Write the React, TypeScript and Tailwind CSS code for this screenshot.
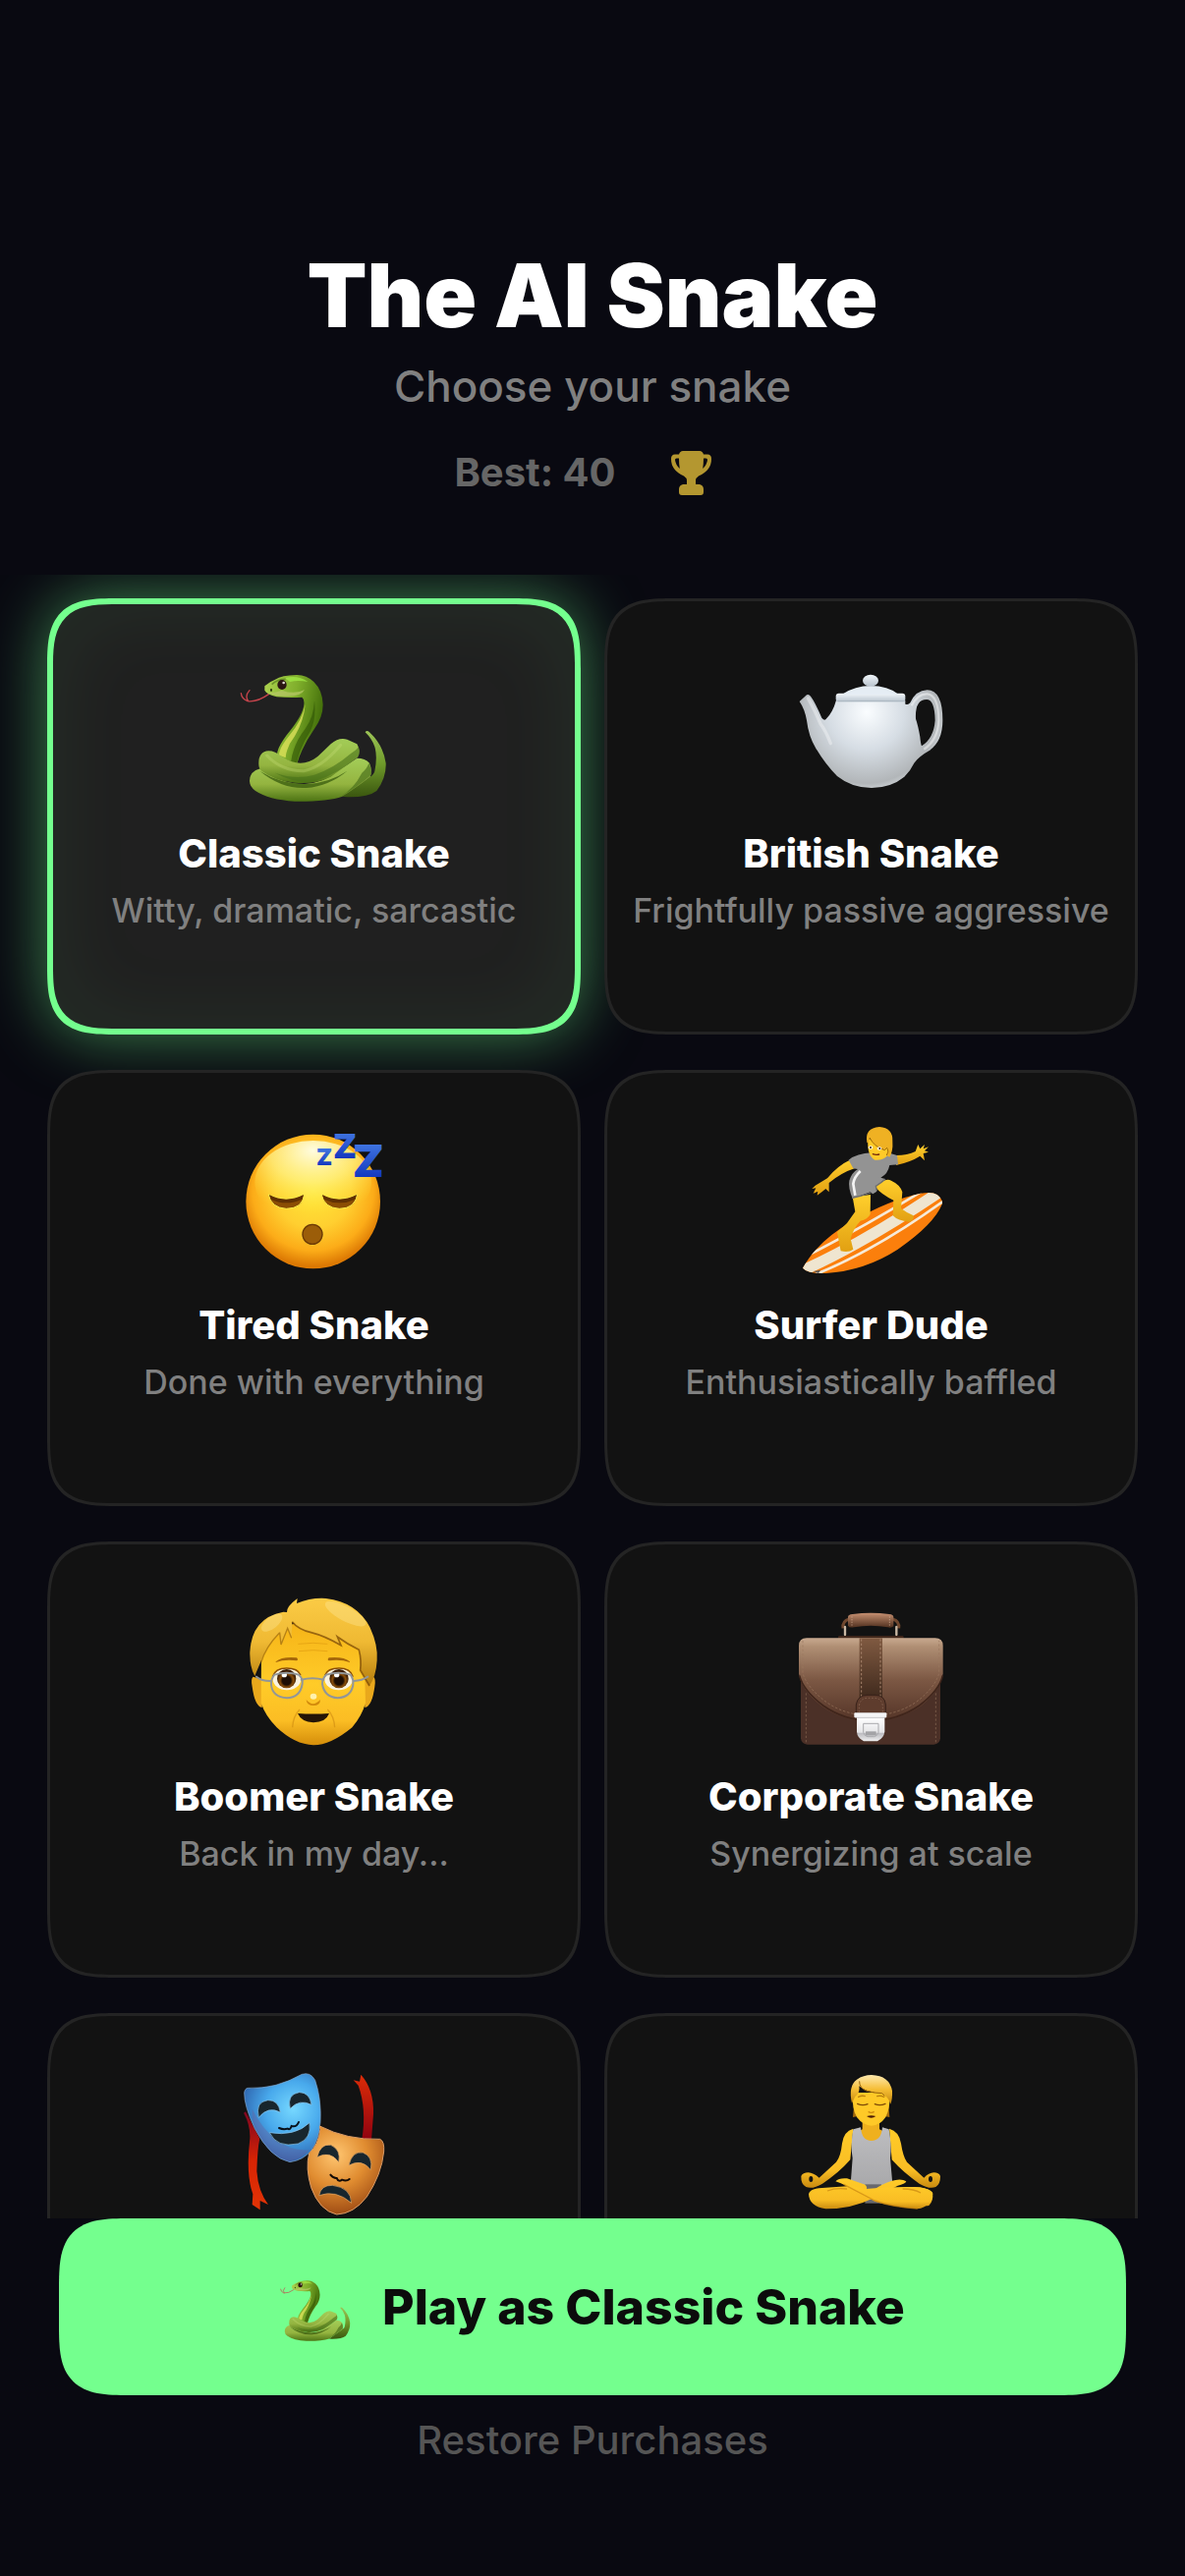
import { useId, useState, type ReactNode } from "react";

function SnakeArt({ viewBox, className }: { viewBox: string; className: string }) {
  const id = useId();
  const neck = `${id}-neck`;
  const coil = `${id}-coil`;
  const tail = `${id}-tail`;
  return (
    <svg viewBox={viewBox} className={className} aria-hidden="true">
      <defs>
        <linearGradient id={neck} x1="0" y1="0.2" x2="1" y2="0.5">
          <stop offset="0" stopColor="#a9cf4c" />
          <stop offset="0.5" stopColor="#7fae2b" />
          <stop offset="1" stopColor="#3f6b08" />
        </linearGradient>
        <linearGradient id={coil} x1="0" y1="0" x2="0" y2="1">
          <stop offset="0" stopColor="#a3cd58" />
          <stop offset="0.6" stopColor="#94b440" />
          <stop offset="1" stopColor="#4d7414" />
        </linearGradient>
        <linearGradient id={tail} x1="0" y1="0" x2="0" y2="1">
          <stop offset="0" stopColor="#9cc456" />
          <stop offset="0.5" stopColor="#6f9a2a" />
          <stop offset="1" stopColor="#3a560f" />
        </linearGradient>
      </defs>
      <path d="M160 110Q125 135 96 131Q78 124 76 107M102 98Q86 115 98 131" fill="none" stroke="#c5444c" strokeWidth="4" strokeLinecap="round" />
      <path d="M455 226Q460 218 468 226Q510 265 518 320Q520 365 490 405Q465 425 400 424L385 422L470 362Q482 355 484 345Q493 300 484 270Q475 245 455 226Z" fill={`url(#${tail})`} />
      <path d="M148 98L148 85Q165 70 180 65Q200 52 245 51Q275 50 298 72Q325 98 326 142Q326 180 300 215Q262 270 247 322L186 300Q182 280 215 235Q265 175 268 142Q270 125 262 119Q225 122 185 118Q155 110 148 98Z" fill={`url(#${neck})`} />
      <path d="M192 296Q192 275 222 238Q262 190 272 140Q268 190 240 238Q214 272 212 304Z" fill="#e3e65e" opacity="0.75" />
      <path d="M228 318Q235 262 272 215Q298 180 300 130Q306 185 288 222Q258 268 246 320Z" fill="#2f5405" opacity="0.6" />
      <path d="M200 98Q240 112 270 96Q260 116 220 116Q180 118 156 104Q175 108 200 98Z" fill="#b9c86a" opacity="0.7" />
      <path d="M210 60Q250 50 280 72Q250 66 225 72Z" fill="#a2ee46" opacity="0.7" />
      <path d="M102 375Q102 345 135 337Q200 385 270 384Q330 380 370 345L430 305Q455 305 468 320Q478 345 470 362Q420 400 385 422Q340 438 240 437Q160 432 120 405Q102 392 102 375Z" fill={`url(#${coil})`} />
      <path d="M134 345Q200 400 275 396Q345 390 400 344Q350 378 280 384Q200 386 134 345Z" fill="#3c5f10" opacity="0.8" />
      <path d="M445 350Q420 400 375 425Q430 395 472 358Q476 340 466 320Q462 335 445 350Z" fill="#456b18" opacity="0.65" />
      <path d="M130 325Q128 285 160 283Q180 283 200 300Q260 340 310 300L350 262Q375 240 400 248L430 262Q443 285 432 302Q380 340 350 362Q300 386 240 380Q180 375 140 345Q130 337 130 325Z" fill={`url(#${coil})`} />
      <path d="M412 290Q360 335 300 356Q240 372 180 350Q240 384 300 376Q370 355 434 300Q440 285 434 270Q430 280 412 290Z" fill="#48721a" opacity="0.6" />
      <path d="M155 297Q200 345 268 344Q322 334 380 265" fill="none" stroke="#c9e07a" strokeWidth="9" strokeLinecap="round" opacity="0.3" />
      <path d="M170 80Q185 64 212 64" fill="none" stroke="#557c1c" strokeWidth="5" opacity="0.7" />
      <ellipse cx="201" cy="81" rx="14" ry="15" fill="#2b1512" />
      <circle cx="206" cy="75" r="4" fill="#ddd6d0" />
      <ellipse cx="168" cy="97" rx="3" ry="5" fill="#28380c" />
    </svg>
  );
}

function TeapotArt() {
  return (
    <>
      <defs>
        <radialGradient id="pot-body" gradientUnits="userSpaceOnUse" cx="275" cy="165" r="255">
          <stop offset="0" stopColor="#fafdff" />
          <stop offset="0.45" stopColor="#d6dde4" />
          <stop offset="0.85" stopColor="#b2b6b9" />
          <stop offset="1" stopColor="#dde2e6" />
        </radialGradient>
        <linearGradient id="pot-lid" x1="0" y1="0" x2="0" y2="1">
          <stop offset="0" stopColor="#f2f7fb" />
          <stop offset="1" stopColor="#b8c3cd" />
        </linearGradient>
      </defs>
      <path
        fillRule="evenodd"
        fill="url(#pot-body)"
        d="M182 128Q172 165 150 187Q145 191 138 182Q118 135 104 116Q98 108 92 112L70 132Q86 155 92 190Q98 240 120 275Q150 325 185 360Q230 396 290 396Q350 395 390 362Q408 345 420 320Q435 300 465 283Q507 255 507 190Q507 98 460 97Q425 98 408 136Q402 144 393 140V128ZM425 185Q422 126 458 126Q483 126 484 190Q480 245 443 268Q440 262 438 240Q432 205 425 185Z"
      />
      <path d="M96 122Q120 165 134 200Q150 220 165 260" fill="none" stroke="#fff" strokeWidth="10" strokeLinecap="round" opacity="0.35" />
      <path d="M412 145Q430 108 460 109Q494 112 495 190Q492 250 450 278" fill="none" stroke="#fff" strokeWidth="7" opacity="0.45" />
      <rect x="181" y="107" width="212" height="26" rx="9" fill="url(#pot-lid)" />
      <path d="M200 110Q240 84 287 84Q340 84 372 110Z" fill="#e5edf4" />
      <ellipse cx="287" cy="68" rx="24" ry="18" fill="url(#pot-lid)" />
      <path d="M184 131H391" stroke="#aab6c0" strokeWidth="3" />
    </>
  );
}

function SleepyArt() {
  return (
    <>
      <defs>
        <radialGradient id="face-fill" gradientUnits="userSpaceOnUse" cx="296" cy="245" r="230">
          <stop offset="0" stopColor="#ffe838" />
          <stop offset="0.5" stopColor="#ffcf30" />
          <stop offset="0.8" stopColor="#fcac18" />
          <stop offset="1" stopColor="#dd7a04" />
        </radialGradient>
        <radialGradient id="face-shine" cx="0.5" cy="0.12" r="0.75">
          <stop offset="0" stopColor="#fffce0" />
          <stop offset="0.5" stopColor="#fff48a" stopOpacity="0.7" />
          <stop offset="1" stopColor="#ffe93a" stopOpacity="0" />
        </radialGradient>
        <linearGradient id="zed" x1="0" y1="0" x2="0" y2="1">
          <stop offset="0.2" stopColor="#3f74e0" />
          <stop offset="1" stopColor="#0424b4" />
        </linearGradient>
      </defs>
      <circle cx="296" cy="279" r="205" fill="url(#face-fill)" />
      <ellipse cx="296" cy="220" rx="178" ry="127" fill="url(#face-shine)" />
      <path d="M160 258Q213 285 268 258Q265 300 214 301Q168 298 160 258ZM322 258Q376 285 430 258Q425 300 376 301Q330 298 322 258Z" fill="#8a4d04" stroke="#fff04e" strokeWidth="3" />
      <path d="M162 258Q213 286 267 258L263 272Q213 294 167 272ZM324 258Q376 286 429 258L425 272Q376 294 329 272Z" fill="#603003" />
      <circle cx="294" cy="379" r="32" fill="#9b5d09" stroke="#ffe04a" strokeWidth="2" />
      <circle cx="294" cy="379" r="30" fill="none" stroke="#6d3a04" strokeWidth="4" />
      <g fontFamily="Inter, sans-serif" fontWeight="900" textAnchor="middle" fill="url(#zed)">
        <text x="330" y="169" fontSize="70">Z</text>
        <text x="393" y="147" fontSize="104">Z</text>
        <text x="464" y="205" fontSize="138">Z</text>
      </g>
    </>
  );
}

function SurferArt() {
  return (
    <>
      <defs>
        <linearGradient id="surf-skin" x1="0" y1="0" x2="0" y2="1">
          <stop offset="0" stopColor="#ffcf2c" />
          <stop offset="1" stopColor="#e2a012" />
        </linearGradient>
        <clipPath id="board">
          <path d="M80 482Q125 400 230 340Q340 275 440 254Q475 248 490 258Q508 272 506 286Q480 350 370 425Q270 490 150 498Q95 500 80 482Z" />
        </clipPath>
      </defs>
      <g clipPath="url(#board)">
        <rect x="70" y="240" width="450" height="270" fill="#fb7f0c" />
        <path d="M70 494Q260 410 500 248" fill="none" stroke="#efe5d0" strokeWidth="34" />
        <path d="M90 446Q260 360 450 244" fill="none" stroke="#f6ead8" strokeWidth="8" />
        <path d="M110 505Q300 430 520 270" fill="none" stroke="#f6ead8" strokeWidth="8" />
      </g>
      <path d="M112 492L134 488L128 498Z" fill="#5b5b5b" />
      <path d="M302 235Q330 205 350 215Q378 228 384 250L380 300Q400 315 418 322Q420 338 405 341Q370 338 355 322L357 275Q320 258 302 235Z" fill="url(#surf-skin)" />
      <path d="M232 265L287 258L286 318Q278 334 256 338Q235 360 226 392L234 425Q220 436 196 430Q190 400 185 372Q205 355 215 345L240 310Z" fill="url(#surf-skin)" />
      <path d="M228 150Q185 170 155 208L118 230L108 240L120 238L112 254L126 248L124 260L140 248L150 240L160 250L160 222Q200 190 238 178Z" fill="url(#surf-skin)" />
      <path d="M365 138Q400 138 424 126L432 105L438 118L452 105L448 118L464 112L452 124L464 128L448 132L452 154L438 140Q410 158 365 168Z" fill="url(#surf-skin)" />
      <path d="M220 152Q245 132 290 130H340L368 138L371 166L345 168Q340 195 318 206L332 210L303 232L306 248L294 256L286 250L232 270Q218 235 222 215Q230 190 248 180L234 178Z" fill="#939393" />
      <path d="M256 186Q236 205 234 225L240 260" fill="none" stroke="#f4f4f4" strokeWidth="8" />
      <path d="M230 268Q262 262 288 252M306 246L303 232Q320 222 332 211" fill="none" stroke="#6f6f6f" strokeWidth="4" />
      <path d="M279 90Q276 140 300 152Q330 156 344 130Q348 95 320 80Z" fill="#ffca28" />
      <path d="M276 98Q268 55 314 51Q356 54 354 95Q356 125 345 143L335 138Q344 124 338 114L330 122Q298 112 284 84Q282 105 276 98Z" fill="#efb123" />
      <path d="M284 84Q298 112 330 122L338 114M338 116Q344 126 336 138" fill="none" stroke="#a06c0a" strokeWidth="3" />
      <ellipse cx="287" cy="114" rx="7" ry="5" fill="#fff" />
      <ellipse cx="314" cy="117" rx="7" ry="5" fill="#fff" />
      <circle cx="287" cy="114" r="3" fill="#402006" />
      <circle cx="315" cy="117" r="3" fill="#402006" />
      <path d="M294 134Q304 138 313 135" fill="none" stroke="#72280a" strokeWidth="4" strokeLinecap="round" />
    </>
  );
}

function BoomerArt() {
  return (
    <>
      <defs>
        <linearGradient id="old-face" x1="0" y1="0" x2="0" y2="1">
          <stop offset="0" stopColor="#f6b418" />
          <stop offset="0.5" stopColor="#ffcb28" />
          <stop offset="0.8" stopColor="#fbbd24" />
          <stop offset="1" stopColor="#d48d0a" />
        </linearGradient>
        <linearGradient id="old-hair" x1="0" y1="0" x2="0" y2="1">
          <stop offset="0" stopColor="#fbcb45" />
          <stop offset="0.5" stopColor="#efb933" />
          <stop offset="1" stopColor="#b57d0c" />
        </linearGradient>
        <radialGradient id="iris" cx="0.5" cy="0.6" r="0.5">
          <stop offset="0.45" stopColor="#1c0d04" />
          <stop offset="0.7" stopColor="#8b500c" />
          <stop offset="1" stopColor="#3a1c04" />
        </radialGradient>
      </defs>
      <path d="M113 290Q105 295 110 320Q118 380 140 384L145 300ZM480 290Q488 295 484 320Q476 380 454 384L448 300Z" fill="#e9a81c" />
      <path d="M138 200Q200 110 300 130Q420 150 452 230L456 370Q445 410 415 445Q350 499 297 499Q240 497 185 445Q150 410 137 370Z" fill="url(#old-face)" />
      <path d="M118 288Q102 260 103 215Q108 110 205 92L216 93Q215 75 248 51L246 66Q290 48 335 51Q430 62 470 140Q495 195 491 240Q488 290 468 318L440 270Q440 225 436 208Q400 190 370 168L381 194Q330 165 290 155Q250 145 232 122L230 172L218 142L198 192L194 155Q150 200 138 240Q125 270 118 288Z" fill="url(#old-hair)" />
      <path d="M232 122Q250 145 290 155Q330 165 381 194L370 168Q400 190 436 208Q444 240 440 270L468 318" fill="none" stroke="#7b4a06" strokeWidth="5" opacity="0.75" />
      <path d="M194 155L198 192L218 142L230 172M194 155Q150 200 138 245" fill="none" stroke="#8d5b08" strokeWidth="4" opacity="0.6" />
      <ellipse cx="170" cy="125" rx="38" ry="18" transform="rotate(-38 170 125)" fill="#fff2ae" opacity="0.3" />
      <ellipse cx="395" cy="98" rx="70" ry="22" transform="rotate(28 395 98)" fill="#fff2ae" opacity="0.3" />
      <path d="M250 190Q297 184 340 190M252 212Q297 206 340 212" fill="none" stroke="#e09c10" strokeWidth="3" opacity="0.7" />
      <path d="M182 244Q200 228 246 232Q252 238 246 241Q210 236 182 246ZM408 244Q390 228 344 232Q338 238 344 241Q380 236 408 246Z" fill="#a5670a" />
      <ellipse cx="216" cy="298" rx="43" ry="33" fill="#fbf3df" />
      <ellipse cx="374" cy="298" rx="43" ry="33" fill="#fbf3df" />
      <circle cx="215" cy="296" r="29" fill="url(#iris)" />
      <circle cx="375" cy="296" r="29" fill="url(#iris)" />
      <circle cx="208" cy="284" r="8" fill="#fff" />
      <circle cx="368" cy="284" r="8" fill="#fff" />
      <path d="M172 290Q180 264 215 264Q250 264 258 285M332 285Q340 264 375 264Q410 264 418 290" fill="none" stroke="#8b4f07" strokeWidth="4" />
      <g fill="none" stroke="#929698" strokeWidth="6" strokeLinecap="round">
        <path d="M178 284Q216 272 252 284Q266 295 263 312Q256 354 216 355Q172 352 168 315Q167 297 178 284Z" />
        <path d="M336 284Q374 272 410 284Q420 297 418 315Q412 352 371 355Q330 352 324 312Q324 295 336 284Z" />
        <path d="M260 299Q294 290 328 299M168 303Q140 304 123 290M420 303Q446 302 463 290" />
      </g>
      <path d="M275 360Q295 385 318 360Q318 378 297 378Q277 378 275 360Z" fill="#d28a0c" />
      <ellipse cx="297" cy="350" rx="10" ry="9" fill="#fff5bc" opacity="0.9" />
      <path d="M249 402Q297 405 345 402Q335 429 297 430Q260 428 249 402Z" fill="#251507" />
      <path d="M255 390Q235 410 233 445M340 390Q360 410 362 445" fill="none" stroke="#cd8a10" strokeWidth="4" opacity="0.6" />
    </>
  );
}

function BriefcaseArt() {
  return (
    <>
      <defs>
        <linearGradient id="leather" x1="0" y1="0" x2="0" y2="1">
          <stop offset="0" stopColor="#c9aa90" />
          <stop offset="0.1" stopColor="#b08f74" />
          <stop offset="0.5" stopColor="#7c5844" />
          <stop offset="1" stopColor="#543427" />
        </linearGradient>
        <linearGradient id="leather-strap" x1="0" y1="0" x2="0" y2="1">
          <stop offset="0" stopColor="#805a41" />
          <stop offset="1" stopColor="#3d281c" />
        </linearGradient>
        <linearGradient id="leather-grip" x1="0" y1="0" x2="0" y2="1">
          <stop offset="0" stopColor="#c58f70" />
          <stop offset="1" stopColor="#50301f" />
        </linearGradient>
        <linearGradient id="clasp" x1="0" y1="0" x2="0" y2="1">
          <stop offset="0" stopColor="#ffffff" />
          <stop offset="0.62" stopColor="#e6e6e8" />
          <stop offset="0.68" stopColor="#bdbdc1" />
          <stop offset="1" stopColor="#eeeeef" />
        </linearGradient>
      </defs>
      <path d="M222 84Q200 90 203 112M354 84Q376 90 373 112" fill="none" stroke="#70482f" strokeWidth="9" />
      <path d="M209 108V132M366 108V132" stroke="#c9b8a4" strokeWidth="7" strokeLinecap="round" />
      <path d="M218 78Q218 70 232 69Q287 62 344 69Q357 70 357 78V106Q350 112 340 109Q287 99 236 109Q222 112 218 104Z" fill="url(#leather-grip)" />
      <path d="M230 76V104M345 76V104" stroke="#d8b59c" strokeWidth="2" strokeDasharray="4 4" />
      <rect x="188" y="135" width="200" height="10" rx="4" fill="#40271b" />
      <path d="M74 260H500V448Q498 466 480 467H94Q76 466 74 448Z" fill="#4b3027" />
      <path d="M90 310V460M486 310V460" stroke="#765846" strokeWidth="3" strokeDasharray="7 6" />
      <path d="M68 165Q68 143 92 142H484Q508 143 508 165V250Q502 300 440 350Q370 395 288 397Q200 395 138 350Q74 300 68 250Z" fill="url(#leather)" />
      <path d="M70 256Q80 300 142 348Q205 393 288 395Q370 393 436 348Q498 300 507 256" fill="none" stroke="#3f251b" strokeWidth="5" />
      <path d="M80 150V250Q95 295 150 336Q205 376 288 380Q370 376 428 336Q482 295 496 250V150" fill="none" stroke="#9b785f" strokeWidth="3" strokeDasharray="7 6" opacity="0.7" />
      <rect x="253" y="142" width="70" height="190" fill="url(#leather-strap)" />
      <path d="M259 145V325M317 145V325" stroke="#a5826a" strokeWidth="3" strokeDasharray="7 6" />
      <path d="M243 372V345Q248 317 275 316H302Q330 317 333 345V372Z" fill="#5e3c2d" stroke="#38221a" strokeWidth="3" />
      <path d="M252 368V348Q256 326 276 325H300Q320 326 324 348V368" fill="none" stroke="#8e6d59" strokeWidth="2" strokeDasharray="5 5" />
      <path d="M245 384H330V428Q328 446 308 457H266Q246 446 245 428Z" fill="url(#clasp)" />
      <rect x="237" y="370" width="99" height="15" rx="3" fill="#f5f5f6" />
      <path d="M240 385H333" stroke="#a9a9ad" strokeWidth="2" />
      <path d="M265 403H311V430Q308 441 298 443H278Q268 441 265 430Z" fill="none" stroke="#aaaaae" strokeWidth="3" />
      <rect x="272" y="427" width="32" height="12" fill="#a3a3a6" />
    </>
  );
}

function MasksArt() {
  return (
    <>
      <defs>
        <radialGradient id="mask-blue" gradientUnits="userSpaceOnUse" cx="235" cy="200" r="170">
          <stop offset="0" stopColor="#76d8ff" />
          <stop offset="0.5" stopColor="#48a9ec" />
          <stop offset="1" stopColor="#2c5ea8" />
        </radialGradient>
        <radialGradient id="mask-gold" gradientUnits="userSpaceOnUse" cx="365" cy="340" r="190">
          <stop offset="0" stopColor="#ffc671" />
          <stop offset="0.5" stopColor="#e08c30" />
          <stop offset="1" stopColor="#9a4712" />
        </radialGradient>
        <linearGradient id="ribbon" x1="0" y1="0" x2="0" y2="1">
          <stop offset="0" stopColor="#dd2c08" />
          <stop offset="1" stopColor="#8f0210" />
        </linearGradient>
        <linearGradient id="ribbon-low" x1="0" y1="0" x2="0" y2="1">
          <stop offset="0" stopColor="#7d0420" />
          <stop offset="0.5" stopColor="#d82404" />
          <stop offset="1" stopColor="#e23406" />
        </linearGradient>
      </defs>
      <path d="M445 292Q460 200 434 128L419 112L438 116L442 95Q482 140 480 215L474 294Z" fill="url(#ribbon)" />
      <path d="M84 212Q105 250 103 290Q90 400 112 460L110 492L134 508V480L159 492Q128 450 124 390Q126 320 133 290L90 208Z" fill="url(#ribbon-low)" />
      <path d="M98 136Q180 140 262 94Q288 86 302 112Q322 170 318 240Q310 350 225 362Q165 350 118 260Q85 190 86 150Q88 136 98 136Z" fill="url(#mask-blue)" stroke="#83a9cf" strokeWidth="2" />
      <path d="M120 262Q165 348 225 360Q262 352 285 325Q230 330 185 295Q140 260 110 200Q108 235 120 262Z" fill="#6e5a96" opacity="0.35" />
      <path d="M316 252Q400 295 500 292Q514 298 512 330Q505 400 460 468Q420 520 368 522Q315 510 290 440Q272 380 284 335Q312 310 318 262Z" fill="url(#mask-gold)" stroke="#d99b66" strokeWidth="3" />
      <g fill="#18262d" stroke="#8ec6ea" strokeWidth="2">
        <path d="M130 226Q118 178 158 173Q190 172 196 210Q158 190 130 226ZM226 199Q215 155 254 149Q286 150 291 187Q254 168 226 199Z" />
        <path d="M163 272Q240 285 285 242Q292 290 250 306Q185 320 163 272Z" />
      </g>
      <g fill="#18262d" stroke="#e6aa68" strokeWidth="2">
        <path d="M308 347Q318 305 350 310Q382 325 374 362Q348 326 308 347ZM405 372Q415 328 448 333Q480 345 472 386Q445 350 405 372Z" />
        <path d="M314 464Q320 432 355 433Q412 440 413 487Q365 445 314 464Z" />
      </g>
      <path d="M192 258Q205 264 218 260Q226 266 230 252Q246 256 252 240" fill="none" stroke="#08101a" strokeWidth="6" strokeLinecap="round" />
      <path d="M349 401Q358 412 368 411Q374 424 384 416Q398 422 407 414" fill="none" stroke="#150c06" strokeWidth="6" strokeLinecap="round" />
    </>
  );
}

function YogaArt() {
  return (
    <>
      <defs>
        <linearGradient id="yoga-skin" x1="0" y1="0" x2="0" y2="1">
          <stop offset="0" stopColor="#ffcb29" />
          <stop offset="0.7" stopColor="#f9bd24" />
          <stop offset="1" stopColor="#c98b10" />
        </linearGradient>
        <linearGradient id="yoga-top" x1="0" y1="0" x2="0" y2="1">
          <stop offset="0" stopColor="#bdbdc0" />
          <stop offset="1" stopColor="#a8a8aa" />
        </linearGradient>
        <linearGradient id="yoga-hair" x1="0" y1="0" x2="0" y2="1">
          <stop offset="0" stopColor="#ffe9ae" />
          <stop offset="0.5" stopColor="#f5bd34" />
          <stop offset="1" stopColor="#c4870f" />
        </linearGradient>
      </defs>
      <path d="M234 260Q205 268 200 305Q196 345 182 362L130 410Q112 395 97 394Q80 394 75 405Q74 430 90 438Q110 446 140 428Q190 395 225 355ZM344 260Q374 268 380 305Q386 345 398 362L450 410Q465 395 480 394Q496 394 500 405Q500 430 486 438Q466 446 436 428Q388 395 352 355Z" fill="url(#yoga-skin)" />
      <ellipse cx="105" cy="414" rx="6" ry="9" fill="#131313" />
      <ellipse cx="470" cy="414" rx="6" ry="9" fill="#131313" />
      <path d="M262 235H314V262L330 270Q310 310 288 310Q262 310 248 270L262 262Z" fill="#efb01e" />
      <path d="M234 262L257 256Q260 297 289 297Q320 297 323 256L343 262Q352 310 347 350L354 430Q290 450 226 430L232 350Q225 310 234 262Z" fill="url(#yoga-top)" />
      <path d="M270 430H320V488H270Z" fill="#68686d" />
      <path d="M180 421Q190 410 215 412L262 428Q278 432 275 444L385 478Q440 500 465 495Q480 480 476 455Q460 438 420 438L300 445Q320 430 350 420Q380 410 396 421Q392 430 370 434L300 470Q230 505 150 505Q100 498 98 460Q102 440 150 440L215 436Q195 425 180 421Z" fill="url(#yoga-skin)" />
      <path d="M272 444Q330 438 400 438Q470 438 477 458Q474 498 430 505Q350 498 300 482L205 430Z" fill="url(#yoga-skin)" />
      <path d="M205 430L300 480Q350 498 430 504M155 450Q180 440 215 444M440 456Q420 444 385 444" fill="none" stroke="#c98611" strokeWidth="4" opacity="0.7" />
      <path d="M236 190L233 225L248 222ZM342 190L345 225L330 222Z" fill="#a56b0b" />
      <path d="M232 150Q230 200 245 225Q265 251 290 251Q315 251 333 225Q347 200 346 150Z" fill="#ffc927" />
      <path d="M230 182Q218 130 245 110Q265 96 290 96Q345 98 353 145Q354 170 348 185Q340 160 320 153Q270 148 252 130Q256 150 240 162Z" fill="url(#yoga-hair)" />
      <path d="M253 115Q252 135 275 145Q300 152 322 152L330 160" fill="none" stroke="#99650b" strokeWidth="3" />
      <path d="M247 184Q262 191 278 185M300 185Q316 191 332 184" fill="none" stroke="#7d4a07" strokeWidth="4" strokeLinecap="round" />
      <path d="M250 163Q260 158 270 161M307 161Q318 158 328 163" fill="none" stroke="#bd820e" strokeWidth="4" strokeLinecap="round" />
      <path d="M280 208Q289 214 298 208" fill="none" stroke="#cf8b0d" strokeWidth="4" />
      <path d="M275 222Q289 217 303 222Q289 232 275 222Z" fill="#4d1c08" />
    </>
  );
}

type Snake = {
  id: string;
  name?: string;
  tagline?: string;
  viewBox: string;
  art: ReactNode;
};

const SNAKES: Snake[] = [
  { id: "classic", name: "Classic Snake", tagline: "Witty, dramatic, sarcastic", viewBox: "0 -60 600 540", art: null },
  { id: "british", name: "British Snake", tagline: "Frightfully passive aggressive", viewBox: "-10 -60 600 540", art: <TeapotArt /> },
  { id: "tired", name: "Tired Snake", tagline: "Done with everything", viewBox: "0 0 600 540", art: <SleepyArt /> },
  { id: "surfer", name: "Surfer Dude", tagline: "Enthusiastically baffled", viewBox: "-10 0 600 540", art: <SurferArt /> },
  { id: "boomer", name: "Boomer Snake", tagline: "Back in my day...", viewBox: "0 0 600 540", art: <BoomerArt /> },
  { id: "corporate", name: "Corporate Snake", tagline: "Synergizing at scale", viewBox: "-10 -30 600 540", art: <BriefcaseArt /> },
  { id: "theater", viewBox: "0 30 600 540", art: <MasksArt /> },
  { id: "zen", viewBox: "-10 30 600 540", art: <YogaArt /> },
];

function SnakeEmoji({ snake }: { snake: Snake }) {
  if (snake.art === null) {
    return <SnakeArt viewBox={snake.viewBox} className="h-[180px] w-[200px]" />;
  }
  return (
    <svg viewBox={snake.viewBox} className="h-[180px] w-[200px]" aria-hidden="true">
      {snake.art}
    </svg>
  );
}

function SnakeCard({ snake, selected, onSelect }: { snake: Snake; selected: boolean; onSelect: () => void }) {
  const state = selected
    ? "border-6 border-[#74ff8e] bg-[#202020] pt-[35px] shadow-[0_0_64px_rgba(116,255,142,0.5),inset_0_0_90px_rgba(116,255,142,0.07)]"
    : "border-3 border-[#242424] bg-[#121212] pt-[38px]";
  return (
    <button
      type="button"
      aria-label={snake.name ?? snake.id}
      aria-pressed={selected}
      onClick={onSelect}
      className={`flex min-h-[444px] flex-col items-center justify-start rounded-[72px] [corner-shape:superellipse(1.65)] ${state}`}
    >
      <SnakeEmoji snake={snake} />
      {snake.name && <span className="mt-4 text-[40px] leading-[46px] font-extrabold text-white">{snake.name}</span>}
      {snake.tagline && (
        <span className="mt-4 text-[34px] leading-[38px] font-medium whitespace-nowrap text-[#808080]">{snake.tagline}</span>
      )}
    </button>
  );
}

function TrophyIcon() {
  return (
    <svg viewBox="0 0 41 45" className="h-[45px] w-[41px]" aria-hidden="true">
      <path
        fill="#b49730"
        fillRule="evenodd"
        d="M12 0H29Q32 0 33 3.5H37Q41 3.5 41 8Q41 20 28 25.5Q25 27.5 25 30V34H29Q33 35 33 39V42Q33 45 30 45H11Q8 45 8 42V39Q8 35 12 34H16V30Q16 27.5 13 25.5Q0 20 0 8Q0 3.5 4 3.5H8Q9 0 12 0ZM8 7.5H5.5Q4 7.5 4 9Q4.5 14 8.8 18Q8 13 8 7.5ZM33 7.5H35.5Q37 7.5 37 9Q36.5 14 32.2 18Q33 13 33 7.5Z"
      />
    </svg>
  );
}

export default function App() {
  const [selectedId, setSelectedId] = useState("classic");
  const selected = SNAKES.find((snake) => snake.id === selectedId) ?? SNAKES[0];

  return (
    <div className="flex h-screen flex-col bg-[#090911] font-['Inter',sans-serif]">
      <header className="flex flex-col items-center pt-[249px] pb-20">
        <h1 className="text-[89px] leading-[104px] font-black text-white">The AI Snake</h1>
        <p className="mt-3 text-[44px] leading-[56px] font-medium text-[#808080]">Choose your snake</p>
        <div className="mt-9 flex h-12 items-center gap-9">
          <span className="text-[40px] leading-[48px] font-bold text-[#666666]">Best: 40</span>
          <button type="button" aria-label="Leaderboard" className="px-5">
            <TrophyIcon />
          </button>
        </div>
      </header>

      <main className="min-h-0 flex-1 overflow-y-auto px-12 pt-6 [scrollbar-width:none]">
        <div className="grid grid-cols-2 gap-x-6 gap-y-9">
          {SNAKES.map((snake) => (
            <SnakeCard key={snake.id} snake={snake} selected={snake.id === selectedId} onSelect={() => setSelectedId(snake.id)} />
          ))}
        </div>
      </main>

      <footer className="flex flex-col items-center px-[60px] pb-[114px]">
        <button
          type="button"
          className="flex w-full items-center justify-center gap-8 rounded-[72px] bg-[#74ff8e] py-[55px] [corner-shape:superellipse(1.65)]"
        >
          {selected.art === null ? (
            <SnakeArt viewBox="75 0 445 438" className="h-[70px] w-[72px]" />
          ) : (
            <svg viewBox={selected.viewBox} className="h-[70px] w-[72px]" aria-hidden="true">
              {selected.art}
            </svg>
          )}
          <span className="text-[50px] leading-[60px] font-extrabold text-[#0c0c0c]">Play as {selected.name ?? selected.id}</span>
        </button>
        <button type="button" className="mt-[22px] text-[40px] leading-[48px] font-medium text-[#555555]">
          Restore Purchases
        </button>
      </footer>
    </div>
  );
}
